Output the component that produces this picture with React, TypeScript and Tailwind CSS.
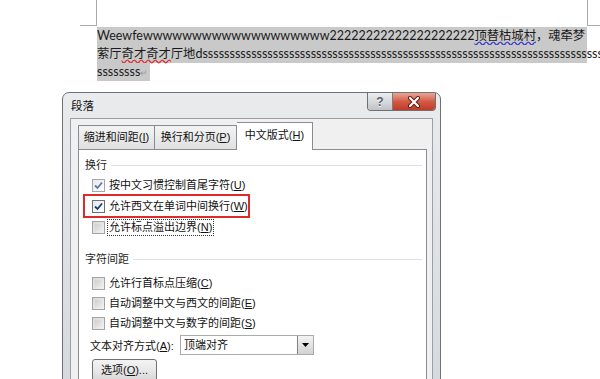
import React from "react";

const W = "w".repeat(18);
const D = "2".repeat(20);
const S2 = "s".repeat(74);

function Box({ state }: { state: "on" | "on2" | "off" }) {
  if (state === "off") {
    return (
      <div className="w-[13px] h-[13px] border border-[#a4a4a4] bg-gradient-to-br from-[#d9d9d9] to-[#f2f2f2] p-[2px] shrink-0">
        <div className="w-full h-full bg-gradient-to-br from-[#cfcfcf] to-[#ececec]" />
      </div>
    );
  }
  const c = state === "on2" ? "#1f3b7a" : "#5d79a8";
  const b = state === "on2" ? "border-[#6d6f72]" : "border-[#a4a8ad]";
  return (
    <div className={`w-[13px] h-[13px] border ${b} bg-gradient-to-br from-[#e8e8e8] to-[#ffffff] shrink-0 flex items-center justify-center`}>
      <svg width="11" height="11" viewBox="0 0 11 11">
        <path d="M2 5.5 L4.5 8 L9 2.5" fill="none" stroke={c} strokeWidth="1.8" />
      </svg>
    </div>
  );
}

function Row({
  state,
  children,
  h,
  focus,
  red,
}: {
  state: "on" | "on2" | "off";
  children: React.ReactNode;
  h: string;
  focus?: boolean;
  red?: boolean;
}) {
  return (
    <div className={`relative flex items-center pl-[13px] ${h}`}>
      <Box state={state} />
      <span
        className={`ml-[2px] leading-[15px] px-[1px] ${focus ? "border border-dotted border-[#333]" : "border border-transparent"}`}
      >
        {children}
      </span>
      {red && <div className="absolute left-[4px] top-[-2px] w-[167px] h-[24px] border-2 border-[#e02a2a]" />}
    </div>
  );
}

function Group({ label, mt }: { label: string; mt: string }) {
  return (
    <div className={`flex items-center h-[16px] pl-[6px] pr-[4px] ${mt}`}>
      <span className="text-[#1e1e1e]">{label}</span>
      <div className="flex-1 h-px bg-[#dcdfe3] ml-[4px]" />
    </div>
  );
}

export default function App() {
  return (
    <div className="w-[600px] h-[379px] overflow-hidden bg-white font-['Lato','Noto_Sans_CJK_SC',sans-serif]">
      {/* page corner marks */}
      <div className="flex h-[26px] ml-[80px]">
        <div className="w-[17px] border-b border-r border-[#a8a8a8]" />
        <div className="flex-1" />
        <div className="w-[13px] border-b border-l border-[#a8a8a8]" />
      </div>
      {/* document text */}
      <div className="mt-[1px] ml-[97px] w-[490px] text-[12.5px] text-[#1a1a1a]">
        <div className="h-[18px] leading-[18px] whitespace-nowrap overflow-hidden bg-[#c9c9c9]">
          {"Weewfew" + W + D}
          <span className="text-[12.3px]">
            <span className="underline decoration-wavy decoration-[#3b3bd0] underline-offset-[1px]">顶替枯城村</span>
            ，魂牵梦
          </span>
        </div>
        <div className="h-[18px] leading-[18px] whitespace-nowrap bg-[#c9c9c9]">
          <span className="text-[12.3px]">
            萦厅
            <span className="underline decoration-wavy decoration-[#e03030] underline-offset-[1px]">奇才奇才</span>
            厅地
          </span>
          d{S2}
        </div>
        <div className="h-[18px] leading-[18px] whitespace-nowrap flex">
          <span className="bg-[#c9c9c9] pr-[2px]">
            ssssssss<span className="text-[9px] text-[#9a9a9a]">↵</span>
          </span>
        </div>
      </div>

      {/* dialog */}
      <div className="mt-[11px] ml-[62px] w-[379px] h-[320px] border border-[#6e7277] rounded-t-[7px] bg-gradient-to-b from-[#e9ebed] to-[#d4d7db] px-[7px] flex flex-col text-[11px] text-[#111] font-['Liberation_Sans','Noto_Sans_CJK_SC',sans-serif]">
        <div className="h-[25px] flex justify-between shrink-0">
          <div className="pl-[1px] pt-[5px] text-[11.5px] text-[#111]">段落</div>
          <div className="flex h-[18px] mr-[-3px] rounded-b-[4px] overflow-hidden border border-t-0 border-[#6f6f6f]">
            <div className="w-[25px] h-full bg-gradient-to-b from-[#eceef0] to-[#bfc3c8] border-r border-[#7d7d7d] flex items-center justify-center text-[12px] font-bold text-[#595d63] [text-shadow:0_1px_0_#fff]">
              ?
            </div>
            <div className="w-[42px] h-full bg-gradient-to-b from-[#e9a597] via-[#d25a45] to-[#c13a26] flex items-center justify-center">
              <svg width="14" height="12" viewBox="0 0 14 12">
                <path d="M3 2 L11 10 M11 2 L3 10" stroke="#5a1a10" strokeWidth="4" strokeLinecap="round" />
                <path d="M3 2 L11 10 M11 2 L3 10" stroke="#ffffff" strokeWidth="2.2" strokeLinecap="round" />
              </svg>
            </div>
          </div>
        </div>
        <div className="flex-1 bg-[#f0f0f0] border border-[#99a0a8] pl-[7px] pt-[3px]">
          <div className="flex items-end h-[27px]">
            <div className="w-[77px] h-[24px] border border-b-0 border-[#898c95] bg-gradient-to-b from-[#f4f4f4] to-[#e0e0e0] flex items-center justify-center">
              缩进和间距(<u>I</u>)
            </div>
            <div className="w-[82px] h-[24px] border border-l-0 border-b-0 border-[#898c95] bg-gradient-to-b from-[#f4f4f4] to-[#e0e0e0] flex items-center justify-center">
              换行和分页(<u>P</u>)
            </div>
            <div className="relative z-10 mb-[-1px] w-[76px] h-[28px] border border-l-0 border-b-0 border-[#898c95] bg-white flex items-center justify-center pb-[2px]">
              中文版式(<u>H</u>)
            </div>
          </div>
          <div className="w-[349px] h-[240px] border border-[#898c95] bg-white flex flex-col">
            <Group label="换行" mt="mt-[7px]" />
            <div className="mt-[2px]">
              <Row state="on" h="h-[21px]">
                按中文习惯控制首尾字符(<u>U</u>)
              </Row>
              <Row state="on2" h="h-[21px]" red>
                允许西文在单词中间换行(<u>W</u>)
              </Row>
              <Row state="off" h="h-[21px]" focus>
                允许标点溢出边界(<u>N</u>)
              </Row>
            </div>
            <Group label="字符间距" mt="mt-[13px]" />
            <div className="mt-[6px]">
              <Row state="off" h="h-[20px]">
                允许行首标点压缩(<u>C</u>)
              </Row>
              <Row state="off" h="h-[20px]">
                自动调整中文与西文的间距(<u>E</u>)
              </Row>
              <Row state="off" h="h-[20px]">
                自动调整中文与数字的间距(<u>S</u>)
              </Row>
            </div>
            <div className="mt-[2px] flex items-center h-[20px] pl-[11px]">
              <div className="w-[90px] pt-[3px]">
                文本对齐方式(<u>A</u>):
              </div>
              <div className="w-[134px] h-[20px] border border-[#a9abaf] flex">
                <div className="flex-1 pl-[3px] flex items-center">顶端对齐</div>
                <div className="w-[16px] h-full border-l border-[#7f8286] bg-gradient-to-b from-[#f3f3f3] to-[#d2d2d2] flex items-center justify-center">
                  <svg width="7" height="4" viewBox="0 0 7 4">
                    <path d="M0 0 L7 0 L3.5 4 Z" fill="#000" />
                  </svg>
                </div>
              </div>
            </div>
            <div className="mt-[4px] ml-[13px] w-[65px] h-[23px] border border-[#707070] rounded-[3px] bg-gradient-to-b from-[#f3f3f3] via-[#e8e8e8] to-[#d6d6d6] flex items-center justify-center">
              选项(<u>O</u>)...
            </div>
          </div>
        </div>
      </div>
    </div>
  );
}
